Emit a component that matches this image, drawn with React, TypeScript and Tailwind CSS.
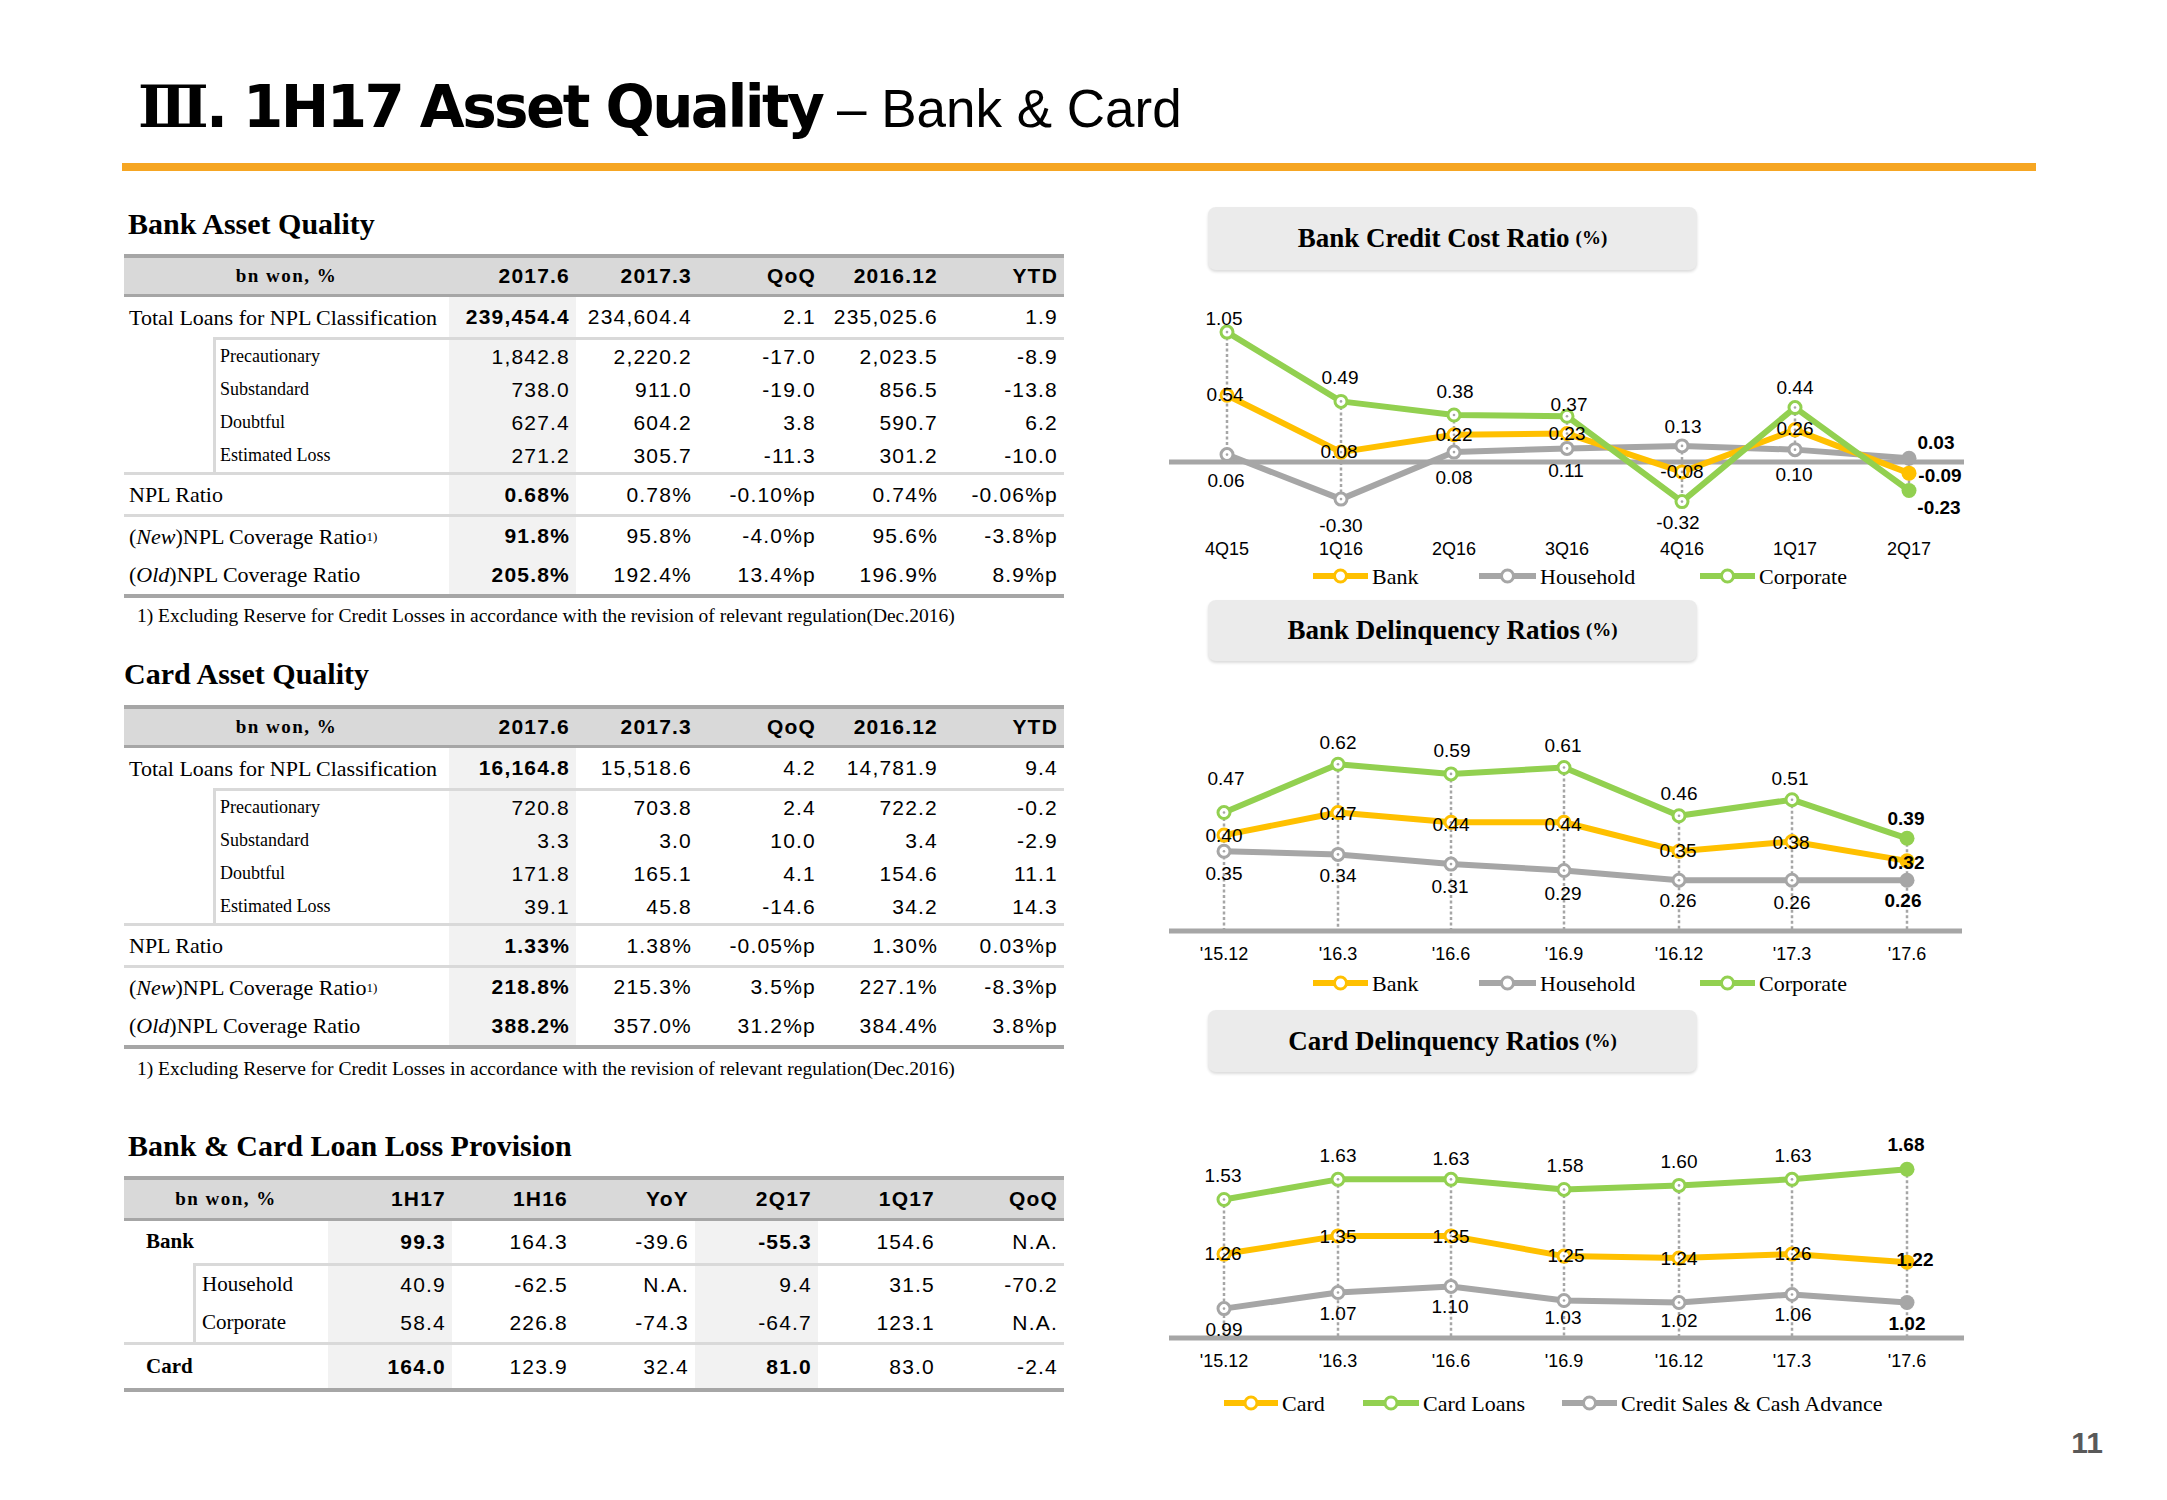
import React from "react";

const SERIF = "font-['Liberation_Serif','Times_New_Roman',serif]";
const NUM = "font-['Liberation_Sans',Arial,sans-serif] text-[21px] tracking-[1.2px] text-black";

const ORANGE = "#FFC000";
const GRAY = "#A6A6A6";
const GREEN = "#92D050";

type AssetData = {
  total: string[];
  subs: [string, string[]][];
  npl: string[];
  newCov: string[];
  oldCov: string[];
};

const bankData: AssetData = {
  total: ["239,454.4", "234,604.4", "2.1", "235,025.6", "1.9"],
  subs: [
    ["Precautionary", ["1,842.8", "2,220.2", "-17.0", "2,023.5", "-8.9"]],
    ["Substandard", ["738.0", "911.0", "-19.0", "856.5", "-13.8"]],
    ["Doubtful", ["627.4", "604.2", "3.8", "590.7", "6.2"]],
    ["Estimated Loss", ["271.2", "305.7", "-11.3", "301.2", "-10.0"]],
  ],
  npl: ["0.68%", "0.78%", "-0.10%p", "0.74%", "-0.06%p"],
  newCov: ["91.8%", "95.8%", "-4.0%p", "95.6%", "-3.8%p"],
  oldCov: ["205.8%", "192.4%", "13.4%p", "196.9%", "8.9%p"],
};

const cardData: AssetData = {
  total: ["16,164.8", "15,518.6", "4.2", "14,781.9", "9.4"],
  subs: [
    ["Precautionary", ["720.8", "703.8", "2.4", "722.2", "-0.2"]],
    ["Substandard", ["3.3", "3.0", "10.0", "3.4", "-2.9"]],
    ["Doubtful", ["171.8", "165.1", "4.1", "154.6", "11.1"]],
    ["Estimated Loss", ["39.1", "45.8", "-14.6", "34.2", "14.3"]],
  ],
  npl: ["1.33%", "1.38%", "-0.05%p", "1.30%", "0.03%p"],
  newCov: ["218.8%", "215.3%", "3.5%p", "227.1%", "-8.3%p"],
  oldCov: ["388.2%", "357.0%", "31.2%p", "384.4%", "3.8%p"],
};

const Val = ({ v, hl, bold }: { v: string; hl?: boolean; bold?: boolean }) => (
  <div className={`flex items-center justify-end pr-[6px] ${hl ? "bg-[#f2f2f2]" : ""} ${bold ? "font-bold" : ""}`}>{v}</div>
);

const Label = ({ children, cls = "" }: { children: React.ReactNode; cls?: string }) => (
  <div className={`flex items-center whitespace-nowrap tracking-normal ${SERIF} ${cls}`}>{children}</div>
);

const MainRow = ({ label, vals, h }: { label: React.ReactNode; vals: string[]; h: string }) => (
  <div className={`grid grid-cols-[325px_127px_122px_124px_122px_120px] ${h}`}>
    <Label cls="pl-[5px] text-[22px]">{label}</Label>
    {vals.map((v, i) => <Val key={i} v={v} hl={i === 0} bold={i === 0} />)}
  </div>
);

const AssetTable = ({ d }: { d: AssetData }) => (
  <div className={`${NUM} border-t-4 border-b-4 border-[#a6a6a6]`}>
    <div className="grid grid-cols-[325px_127px_122px_124px_122px_120px] h-[39px] bg-[#d9d9d9] border-b-[3px] border-[#a6a6a6] font-bold">
      <div className={`flex items-center justify-center ${SERIF} text-[19px] tracking-[1.5px]`}>bn won, %</div>
      {["2017.6", "2017.3", "QoQ", "2016.12", "YTD"].map(h => <div key={h} className="flex items-center justify-end pr-[6px]">{h}</div>)}
    </div>
    <MainRow label="Total Loans for NPL Classification" vals={d.total} h="h-[40px]" />
    <div className="ml-[89px] border-l-[3px] border-t-[3px] border-[#d9d9d9]">
      {d.subs.map(([name, vals]) => (
        <div key={name} className="grid grid-cols-[233px_127px_122px_124px_122px_120px] h-[33px]">
          <Label cls="pl-[4px] text-[18px]">{name}</Label>
          {vals.map((v, i) => <Val key={i} v={v} hl={i === 0} />)}
        </div>
      ))}
    </div>
    <div className="h-[3px] bg-[#d9d9d9]" />
    <MainRow label="NPL Ratio" vals={d.npl} h="h-[39px]" />
    <div className="h-[3px] bg-[#d9d9d9]" />
    <MainRow label={<span>(<i>New</i>)NPL Coverage Ratio<sup className="text-[13px] relative -top-[3px]">1)</sup></span>} vals={d.newCov} h="h-[38px]" />
    <MainRow label={<span>(<i>Old</i>)NPL Coverage Ratio</span>} vals={d.oldCov} h="h-[39px]" />
  </div>
);

const provRows: { name: string; vals: string[] }[] = [
  { name: "Household", vals: ["40.9", "-62.5", "N.A.", "9.4", "31.5", "-70.2"] },
  { name: "Corporate", vals: ["58.4", "226.8", "-74.3", "-64.7", "123.1", "N.A."] },
];

const ProvisionTable = () => (
  <div className={`${NUM} border-t-4 border-b-4 border-[#a6a6a6]`}>
    <div className="grid grid-cols-[204px_124px_122px_121px_123px_123px_123px] h-[41px] bg-[#d9d9d9] border-b-[3px] border-[#a6a6a6] font-bold">
      <div className={`flex items-center justify-center ${SERIF} text-[19px] tracking-[1.5px]`}>bn won, %</div>
      {["1H17", "1H16", "YoY", "2Q17", "1Q17", "QoQ"].map(h => <div key={h} className="flex items-center justify-end pr-[6px]">{h}</div>)}
    </div>
    <div className="grid grid-cols-[204px_124px_122px_121px_123px_123px_123px] h-[42px]">
      <Label cls="pl-[22px] text-[21px] font-bold">Bank</Label>
      {["99.3", "164.3", "-39.6", "-55.3", "154.6", "N.A."].map((v, i) => <Val key={i} v={v} hl={i === 0 || i === 3} bold={i === 0 || i === 3} />)}
    </div>
    <div className="ml-[69px] border-l-[3px] border-t-[3px] border-[#d9d9d9]">
      {provRows.map(r => (
        <div key={r.name} className="grid grid-cols-[132px_124px_122px_121px_123px_123px_123px] h-[38px]">
          <Label cls="pl-[6px] text-[21px]">{r.name}</Label>
          {r.vals.map((v, i) => <Val key={i} v={v} hl={i === 0 || i === 3} />)}
        </div>
      ))}
    </div>
    <div className="h-[3px] bg-[#d9d9d9]" />
    <div className="grid grid-cols-[204px_124px_122px_121px_123px_123px_123px] h-[43px]">
      <Label cls="pl-[22px] text-[21px] font-bold">Card</Label>
      {["164.0", "123.9", "32.4", "81.0", "83.0", "-2.4"].map((v, i) => <Val key={i} v={v} hl={i === 0 || i === 3} bold={i === 0 || i === 3} />)}
    </div>
  </div>
);

const Footnote = () => (
  <div className={`${SERIF} text-[19.5px] h-[24px] leading-[24px] pl-[13px] text-black whitespace-nowrap`}>
    1) Excluding Reserve for Credit Losses in accordance with the revision of relevant regulation(Dec.2016)
  </div>
);

// ---------- charts ----------
type Lbl = [string, number, number, boolean?];
type Series = { color: string; values: number[]; labels: Lbl[] };
type ChartCfg = {
  top: number;
  height: number;
  xs: number[];
  y: (v: number) => number;
  axisY: number;
  axisX: [number, number];
  dashToAxis: boolean;
  series: Series[];
  xLabels: string[];
  xLabelY: number;
  legend: { color: string; x1: number; x2: number; text: string }[];
  legendY: number;
};

const SANS = "Liberation Sans, Arial, sans-serif";
const TSERIF = "Liberation Serif, Times New Roman, serif";

const Marker = ({ x, y, color, last }: { x: number; y: number; color: string; last?: boolean }) =>
  last ? (
    <circle cx={x} cy={y} r={7.5} fill={color} />
  ) : (
    <g>
      <circle cx={x} cy={y} r={6} fill="#fff" stroke={color} strokeWidth={3} />
      <circle cx={x} cy={y} r={1.3} fill="#a6a6a6" />
    </g>
  );

const Chart = ({ c }: { c: ChartCfg }) => {
  const W = 795;
  return (
    <svg width={W} height={c.height} viewBox={`1169 ${c.top} ${W} ${c.height}`} className="block">
      <line x1={c.axisX[0]} x2={c.axisX[1]} y1={c.axisY} y2={c.axisY} stroke={GRAY} strokeWidth={5} />
      {c.xs.map((x, i) => {
        const ys = c.series.map(s => c.y(s.values[i]));
        const top = Math.min(...ys);
        const bottom = c.dashToAxis ? c.axisY : Math.max(...ys);
        return <line key={i} x1={x} x2={x} y1={top} y2={bottom} stroke="#a6a6a6" strokeWidth={2.5} strokeDasharray="3 2.5" />;
      })}
      {c.series.map((s, si) => (
        <polyline key={si} points={s.values.map((v, i) => `${c.xs[i]},${c.y(v)}`).join(" ")} fill="none" stroke={s.color} strokeWidth={6} strokeLinejoin="round" />
      ))}
      {c.series.map((s, si) => (
        <g key={si}>{s.values.map((v, i) => <Marker key={i} x={c.xs[i]} y={c.y(v)} color={s.color} last={i === s.values.length - 1} />)}</g>
      ))}
      {c.series.map((s, si) => (
        <g key={si}>
          {s.labels.map(([t, x, y, b], i) => (
            <text key={i} x={x} y={y} textAnchor="middle" dominantBaseline="central" fontSize={19} fontWeight={b ? 700 : 400} fontFamily={SANS} fill="#000">{t}</text>
          ))}
        </g>
      ))}
      {c.xLabels.map((t, i) => (
        <text key={t} x={c.xs[i]} y={c.xLabelY} textAnchor="middle" dominantBaseline="central" fontSize={18} fontFamily={SANS} fill="#000">{t}</text>
      ))}
      {c.legend.map(l => (
        <g key={l.text}>
          <line x1={l.x1} x2={l.x2} y1={c.legendY} y2={c.legendY} stroke={l.color} strokeWidth={6} />
          <circle cx={(l.x1 + l.x2) / 2} cy={c.legendY} r={6} fill="#fff" stroke={l.color} strokeWidth={3} />
          <text x={l.x2 + 4} y={c.legendY} dominantBaseline="central" fontSize={22} fontFamily={TSERIF} fill="#000">{l.text}</text>
        </g>
      ))}
    </svg>
  );
};

const X1 = [1227, 1341, 1454, 1567, 1682, 1795, 1909];
const X2 = [1224, 1338, 1451, 1564, 1679, 1792, 1907];
const qLabels = ["'15.12", "'16.3", "'16.6", "'16.9", "'16.12", "'17.3", "'17.6"];

const creditCost: ChartCfg = {
  top: 270, height: 330, xs: X1, y: v => 462 - v * 123.7, axisY: 462, axisX: [1169, 1964], dashToAxis: false,
  series: [
    { color: GRAY, values: [0.06, -0.3, 0.08, 0.11, 0.13, 0.1, 0.03], labels: [["0.06", 1226, 480], ["-0.30", 1341, 525], ["0.08", 1454, 477], ["0.11", 1566, 470], ["0.13", 1683, 426], ["0.10", 1794, 474], ["0.03", 1936, 442, true]] },
    { color: ORANGE, values: [0.54, 0.08, 0.22, 0.23, -0.08, 0.26, -0.09], labels: [["0.54", 1225, 394], ["0.08", 1339, 451], ["0.22", 1454, 434], ["0.23", 1567, 433], ["-0.08", 1682, 471], ["0.26", 1795, 428], ["-0.09", 1940, 475, true]] },
    { color: GREEN, values: [1.05, 0.49, 0.38, 0.37, -0.32, 0.44, -0.23], labels: [["1.05", 1224, 318], ["0.49", 1340, 377], ["0.38", 1455, 391], ["0.37", 1569, 404], ["-0.32", 1678, 522], ["0.44", 1795, 387], ["-0.23", 1939, 507, true]] },
  ],
  xLabels: ["4Q15", "1Q16", "2Q16", "3Q16", "4Q16", "1Q17", "2Q17"], xLabelY: 549,
  legend: [
    { color: ORANGE, x1: 1313, x2: 1368, text: "Bank" },
    { color: GRAY, x1: 1479, x2: 1536, text: "Household" },
    { color: GREEN, x1: 1700, x2: 1755, text: "Corporate" },
  ],
  legendY: 576,
};

const bankDelinq: ChartCfg = {
  top: 661, height: 349, xs: X2, y: v => 963.9 - v * 322, axisY: 931, axisX: [1169, 1962], dashToAxis: true,
  series: [
    { color: GRAY, values: [0.35, 0.34, 0.31, 0.29, 0.26, 0.26, 0.26], labels: [["0.35", 1224, 873], ["0.34", 1338, 875], ["0.31", 1450, 886], ["0.29", 1563, 893], ["0.26", 1678, 900], ["0.26", 1792, 902], ["0.26", 1903, 900, true]] },
    { color: ORANGE, values: [0.4, 0.47, 0.44, 0.44, 0.35, 0.38, 0.32], labels: [["0.40", 1224, 835], ["0.47", 1338, 813], ["0.44", 1451, 824], ["0.44", 1563, 824], ["0.35", 1678, 850], ["0.38", 1791, 842], ["0.32", 1906, 862, true]] },
    { color: GREEN, values: [0.47, 0.62, 0.59, 0.61, 0.46, 0.51, 0.39], labels: [["0.47", 1226, 778], ["0.62", 1338, 742], ["0.59", 1452, 750], ["0.61", 1563, 745], ["0.46", 1679, 793], ["0.51", 1790, 778], ["0.39", 1906, 818, true]] },
  ],
  xLabels: qLabels, xLabelY: 954,
  legend: [
    { color: ORANGE, x1: 1313, x2: 1368, text: "Bank" },
    { color: GRAY, x1: 1479, x2: 1536, text: "Household" },
    { color: GREEN, x1: 1700, x2: 1755, text: "Corporate" },
  ],
  legendY: 983,
};

const cardDelinq: ChartCfg = {
  top: 1072, height: 350, xs: X2, y: v => 1508.6 - v * 202, axisY: 1338, axisX: [1166, 1964], dashToAxis: true,
  series: [
    { color: GRAY, values: [0.99, 1.07, 1.1, 1.03, 1.02, 1.06, 1.02], labels: [["0.99", 1224, 1329], ["1.07", 1338, 1313], ["1.10", 1450, 1306], ["1.03", 1563, 1317], ["1.02", 1679, 1320], ["1.06", 1793, 1314], ["1.02", 1907, 1323, true]] },
    { color: ORANGE, values: [1.26, 1.35, 1.35, 1.25, 1.24, 1.26, 1.22], labels: [["1.26", 1223, 1253], ["1.35", 1338, 1236], ["1.35", 1451, 1236], ["1.25", 1566, 1255], ["1.24", 1679, 1258], ["1.26", 1793, 1253], ["1.22", 1915, 1259, true]] },
    { color: GREEN, values: [1.53, 1.63, 1.63, 1.58, 1.6, 1.63, 1.68], labels: [["1.53", 1223, 1175], ["1.63", 1338, 1155], ["1.63", 1451, 1158], ["1.58", 1565, 1165], ["1.60", 1679, 1161], ["1.63", 1793, 1155], ["1.68", 1906, 1144, true]] },
  ],
  xLabels: qLabels, xLabelY: 1361,
  legend: [
    { color: ORANGE, x1: 1224, x2: 1278, text: "Card" },
    { color: GREEN, x1: 1363, x2: 1419, text: "Card Loans" },
    { color: GRAY, x1: 1562, x2: 1617, text: "Credit Sales & Cash Advance" },
  ],
  legendY: 1403,
};

const ChartTitle = ({ title, h }: { title: string; h: string }) => (
  <div className={`ml-[39px] w-[489px] ${h} rounded-[8px] bg-[#ebebeb] shadow-[0_2px_3px_rgba(0,0,0,0.14)] flex items-center justify-center ${SERIF} font-bold text-black`}>
    <span className="text-[27px]">{title}</span>
    <span className="text-[19px] ml-[6px]">(%)</span>
  </div>
);

export default function App() {
  return (
    <div className="w-[2167px] h-[1500px] bg-white overflow-hidden text-black">
      <div className="pl-[138px] pt-[78px] h-[137px] leading-none whitespace-nowrap">
        <span className="font-['DejaVu_Sans',sans-serif] font-bold text-[58px] tracking-[-2.6px]">
          <span className="font-['DejaVu_Serif',serif]">Ⅲ</span>. 1H17 Asset Quality
        </span>
        <span className="font-['Liberation_Sans',Arial,sans-serif] text-[53px]"> – Bank &amp; Card</span>
      </div>
      <div className="ml-[122px] mt-[26px] w-[1914px] h-[8px] bg-[#F6A623]" />

      <div className="flex">
        <div className="ml-[124px] w-[940px] pt-[35px]">
          <div className={`${SERIF} font-bold text-[30px] h-[36px] leading-[36px] pl-[4px]`}>Bank Asset Quality</div>
          <div className="mt-[12px]"><AssetTable d={bankData} /></div>
          <div className="mt-[6px]"><Footnote /></div>

          <div className={`${SERIF} font-bold text-[30px] h-[36px] leading-[36px] mt-[28px]`}>Card Asset Quality</div>
          <div className="mt-[13px]"><AssetTable d={cardData} /></div>
          <div className="mt-[8px]"><Footnote /></div>

          <div className={`${SERIF} font-bold text-[30px] h-[36px] leading-[36px] pl-[4px] mt-[47px]`}>Bank &amp; Card Loan Loss Provision</div>
          <div className="mt-[12px]"><ProvisionTable /></div>
        </div>

        <div className="ml-[105px] w-[795px] pt-[36px]">
          <ChartTitle title="Bank Credit Cost Ratio" h="h-[63px]" />
          <Chart c={creditCost} />
          <ChartTitle title="Bank Delinquency Ratios" h="h-[61px]" />
          <Chart c={bankDelinq} />
          <ChartTitle title="Card Delinquency Ratios" h="h-[62px]" />
          <Chart c={cardDelinq} />
        </div>
      </div>

      <div className="flex justify-end pr-[64px] mt-[6px]">
        <span className="font-['Liberation_Sans',Arial,sans-serif] font-bold text-[30px] leading-none text-[#595959]">11</span>
      </div>
    </div>
  );
}
